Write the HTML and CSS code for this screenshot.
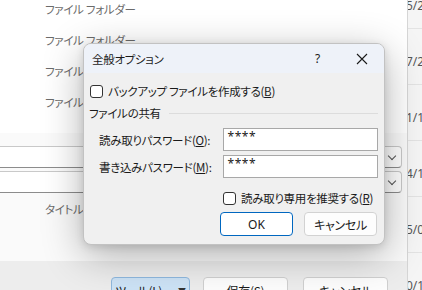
FILE: index.html
```html
<!DOCTYPE html>
<html lang="ja">
<head>
    <meta charset="UTF-8">
    <title>全般オプション</title>
    <link rel="stylesheet" href="styles.css">
</head>
<body>
    <div class="window">
        <div class="main">
            <div class="file-list">
                <div class="file-row">ファイル フォルダー</div>
                <div class="file-row">ファイル フォルダー</div>
                <div class="file-row">ファイル フォルダー</div>
                <div class="file-row">ファイル フォルダー</div>
            </div>
            <div class="form">
                <div class="combo"><span class="chev"></span></div>
                <div class="combo"><span class="chev"></span></div>
                <div class="meta-label">タイトル</div>
            </div>
            <div class="footer">
                <button class="btn btn-tools">ツール(L)<span class="caret">▼</span></button>
                <button class="btn btn-save">保存(S)</button>
                <button class="btn btn-cancel">キャンセル</button>
            </div>
        </div>
        <div class="date-col">
            <div class="date-cell">5/25</div>
            <div class="date-cell">7/21</div>
            <div class="date-cell">1/14</div>
            <div class="date-cell">4/12</div>
            <div class="date-cell">5/03</div>
            <div class="date-cell">0/15</div>
        </div>
    </div>

    <div class="dialog">
        <div class="dialog-title">
            <span class="title-text">全般オプション</span>
            <span class="title-help">?</span>
            <span class="title-close">
                <svg width="12" height="12" viewBox="0 0 12 12"><path d="M1 1 L11 11 M11 1 L1 11" stroke="#1a1a1a" stroke-width="1.1" fill="none"/></svg>
            </span>
        </div>
        <div class="dialog-body">
            <label class="check-row">
                <span class="checkbox"></span>
                <span>バックアップ ファイルを作成する(<u>B</u>)</span>
            </label>
            <div class="group-head">
                <span>ファイルの共有</span>
                <span class="group-line"></span>
            </div>
            <div class="field-row">
                <span class="field-label">読み取りパスワード(<u>O</u>):</span>
                <div class="field-input">****</div>
            </div>
            <div class="field-row field-row-2">
                <span class="field-label">書き込みパスワード(<u>M</u>):</span>
                <div class="field-input">****</div>
            </div>
            <label class="check-row check-ro">
                <span class="checkbox"></span>
                <span>読み取り専用を推奨する(<u>R</u>)</span>
            </label>
            <div class="dialog-buttons">
                <button class="dbtn dbtn-ok">OK</button>
                <button class="dbtn">キャンセル</button>
            </div>
        </div>
    </div>
</body>
</html>
```

FILE: styles.css
```css
body {
    margin: 0;
    width: 422px;
    height: 290px;
    overflow: hidden;
    position: relative;
    font-family: "Noto Sans CJK JP", "Noto Sans", sans-serif;
    font-feature-settings: "palt";
    font-size: 11.5px;
    letter-spacing: -0.3px;
    color: #1a1a1a;
    background: #fff;
}
.window {
    display: flex;
    height: 290px;
}
.main {
    width: 407px;
    display: flex;
    flex-direction: column;
    overflow: hidden;
}
.file-list {
    flex-shrink: 0;
    margin-top: -6px;
    padding-bottom: 15px;
    background: #fff;
}
.file-row {
    height: 31px;
    line-height: 31px;
    padding-left: 45px;
    color: #6b6b6b;
}
.form {
    flex-shrink: 0;
    height: 128px;
    box-sizing: border-box;
    padding-top: 13px;
    background: #fafafa;
}
.combo {
    margin-left: -4px;
    width: 406px;
    height: 22px;
    box-sizing: border-box;
    border: 1px solid #c9c9c9;
    border-bottom-color: #8c8c8c;
    border-radius: 0 4px 4px 0;
    background: #fff;
    display: flex;
    justify-content: flex-end;
    align-items: center;
    padding-right: 6px;
}
.combo + .combo {
    margin-top: 3px;
}
.chev {
    width: 5px;
    height: 5px;
    border-right: 1px solid #555;
    border-bottom: 1px solid #555;
    transform: rotate(45deg);
    margin-top: -3px;
}
.meta-label {
    margin-top: 8px;
    padding-left: 45px;
    line-height: 16px;
    color: #6b6b6b;
}
.footer {
    flex: 1;
    background: #ededed;
    display: flex;
    align-items: flex-start;
    padding-top: 16px;
    padding-left: 111px;
}
.btn {
    flex-shrink: 0;
    height: 26px;
    box-sizing: border-box;
    font-family: inherit;
    font-feature-settings: "palt";
    font-size: 12px;
    letter-spacing: -0.3px;
    color: #1a1a1a;
    background: #fdfdfd;
    border: 1px solid #d0d0d0;
    border-radius: 4px;
    padding: 0;
}
.btn-tools {
    width: 79px;
    background: #cde3f6;
    border-color: #8fb8de;
    display: flex;
    align-items: center;
    justify-content: center;
    gap: 16px;
}
.caret {
    font-size: 8px;
    color: #333;
}
.btn-save {
    width: 85px;
    margin-left: 13px;
}
.btn-cancel {
    width: 85px;
    margin-left: 15px;
}
.date-col {
    flex: 1;
    border-left: 1px solid #d6d6d6;
    background: #f5f5f5;
    margin-top: -27px;
    overflow: hidden;
}
.date-cell {
    height: 56px;
    box-sizing: border-box;
    border-bottom: 1px solid #e3e3e3;
    padding-top: 25px;
    line-height: 16px;
    color: #555;
    font-family: "Noto Sans", sans-serif;
    font-size: 12px;
    letter-spacing: 0;
    text-indent: -2px;
    white-space: nowrap;
}
.dialog {
    position: absolute;
    left: 83px;
    top: 43px;
    width: 302px;
    height: 202px;
    box-sizing: border-box;
    border: 1px solid #c2c2c2;
    border-radius: 8px;
    background: #f0f0f0;
    overflow: hidden;
    box-shadow: 0 10px 40px rgba(0, 0, 0, 0.3), 0 2px 8px rgba(0, 0, 0, 0.12);
}
.dialog-title {
    height: 29px;
    background: #eef2f9;
    display: flex;
    align-items: center;
    padding-left: 8px;
}
.title-text {
    flex: 1;
}
.title-help {
    font-family: "Noto Sans", sans-serif;
    font-size: 12px;
    margin-right: 36px;
}
.title-close {
    display: flex;
    margin-right: 16px;
}
.dialog-body {
    display: flex;
    flex-direction: column;
    padding: 0 6px 0 5px;
}
.check-row {
    display: flex;
    align-items: center;
    gap: 5px;
    height: 16px;
    margin-top: 10px;
    padding-left: 1px;
    white-space: nowrap;
}
.checkbox {
    flex-shrink: 0;
    width: 11px;
    height: 11px;
    border: 1px solid #333;
    border-radius: 3px;
    background: #fff;
}
.group-head {
    display: flex;
    align-items: center;
    gap: 8px;
    height: 16px;
    margin-top: 6px;
}
.group-line {
    flex: 1;
    height: 1px;
    background: #dcdcdc;
}
.field-row {
    display: flex;
    align-items: center;
    margin-top: 7px;
}
.field-row-2 {
    margin-top: 4px;
}
.field-label {
    width: 124px;
    padding-left: 10px;
    white-space: nowrap;
}
.field-input {
    width: 156px;
    height: 23px;
    box-sizing: border-box;
    border: 1px solid #a8a8a8;
    background: #fff;
    padding: 1px 4px;
    line-height: 14px;
    font-family: "Noto Sans", sans-serif;
    font-size: 12px;
    letter-spacing: 0.5px;
}
.check-ro {
    margin-top: 12px;
    padding-left: 134px;
}
.dialog-buttons {
    display: flex;
    gap: 11px;
    margin-top: 6px;
    padding-left: 131px;
}
.dbtn {
    width: 73px;
    height: 24px;
    box-sizing: border-box;
    font-family: inherit;
    font-feature-settings: "palt";
    font-size: 12px;
    letter-spacing: -0.3px;
    color: #1a1a1a;
    background: #fdfdfd;
    border: 1px solid #d2d2d2;
    border-radius: 4px;
    padding: 0;
}
.dbtn-ok {
    border: 1px solid #0067c0;
    background: #fff;
    font-family: "Noto Sans", sans-serif;
    letter-spacing: 0;
}
```
